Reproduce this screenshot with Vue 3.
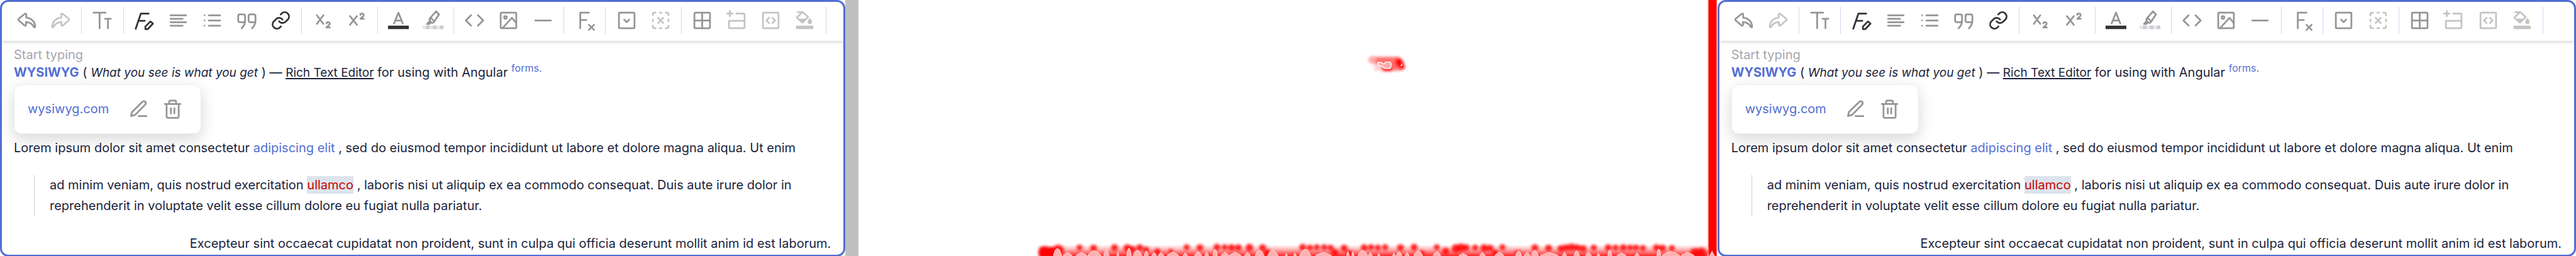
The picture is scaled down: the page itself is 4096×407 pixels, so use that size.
<script setup>
const line = (d) => `<path d="${d}"/>`
const frame = '<rect x="3" y="3" width="18" height="18" rx="1"/>'
const undo = line('M2.6 11.8Q2 11 2.6 10.2L9.5 4.5Q11.5 3.2 11.5 5.6V8.9C17 9.2 21.5 13 21.8 19.3Q21.5 20.8 20.2 19.4C18.3 15.6 15.3 14.2 11.2 13.8V16.8Q11 19 9.3 17.6Z')

const icons = {
  undo,
  redo: `<g transform="translate(24 0) scale(-1 1)">${undo}</g>`,
  size: line('M2 3H16M9 3V21M15.2 10H22M18.6 10V21'),
  font: line('M17 4H8L2 21.6M5 12.4H12.5M19 13.2L22 15.6L16 22H13.2V19Z'),
  align: line('M3 6H21M3 10H17M3 14H21M3 18H17'),
  list: line('M3 6h.01M3 12h.01M3 18h.01M8 6H21M8 12H21M8 18H21'),
  quote: line('M10 12C10 13.5 9.5 14 8 14H4Q2 14 2 12V7Q2 5 4 5H8Q10 5 10 7V12C10 16 8.6 18.6 6 21M22 12C22 13.5 21.5 14 20 14H16Q14 14 14 12V7Q14 5 16 5H20Q22 5 22 7V12C22 16 20.6 18.6 18 21'),
  link: line('M10 13a5 5 0 0 0 7.5.5l3-3a5 5 0 0 0-7-7L11.800 5.200M14 11a5 5 0 0 0-7.500-.5l-3 3a5 5 0 0 0 7 7l1.700-1.700'),
  sub: line('M5 6L12.500 16M12.500 6L5 16M16 15.500Q16 14 18 14T19.800 16Q19.800 17.200 16 20H20'),
  sup: line('M4 7L12 17M12 7L4 17M16 5.500Q16 4 18 4T19.800 6Q19.800 7.200 16 10H20'),
  color: line('M7 15.500L12 3L17 15.500M8.800 12H15.200') + '<rect class="ink" x="0" y="18" width="24" height="4"/>',
  marker:
    line('M15.500 1.500L19 5L13 14Q11.500 15.500 10 14.200L8.500 12.600Q7.500 11.200 8.500 9.500ZM9.200 8.800L13.600 13.200') +
    '<path class="solid" d="M7.500 12L4 16Q4 17 5 17H8L10.500 15Z"/>' +
    '<path class="pale" d="M0 18H24V22H0Z"/><path class="tile" d="M4 18h4v4H4zM12 18h4v4h-4zM20 18h4v4h-4z"/>',
  code: line('M8 6L2 12L8 18M16 6L22 12L16 18'),
  image: frame + '<circle cx="8.500" cy="8.500" r="1.500"/>' + line('M5 21L16 9L21 15'),
  rule: line('M3 12H21'),
  clear: line('M7 21V3H17M7 11.500H14M17 17L23 23M23 17L17 23'),
  details: frame + line('M9 11L12 14L15 11'),
  remove: line('M3 6V5Q3 3 5 3H6M11 3H13M18 3H19Q21 3 21 5V6M21 11V13M21 18V19Q21 21 19 21H18M13 21H11M6 21H5Q3 21 3 19V18M3 13V11M9 9L15 15M15 9L9 15'),
  table: frame + line('M12 3V21M3 12H21'),
  rows: line('M1 4H7M4 1V7M11.600 4H20Q21 4 21 5V20Q21 21 20 21H4Q3 21 3 20V12.500H21'),
  cell: frame + line('M10 9L7 12L10 15M14 9L17 12L14 15'),
  fill:
    line('M4 2.500H10L16 8L9.500 14.500L3.500 9.500Q2.800 8.800 3.500 8L9 2.800') +
    '<path class="solid" d="M3.500 10H15L9 15.500Z"/><path class="solid" d="M18 9Q20.500 11.500 20.500 13.600A2.500 2.500 0 0 1 15.500 13.600Q15.500 11.500 18 9Z"/>' +
    '<rect class="solid" x="2" y="18" width="20" height="4" rx=".7"/>',
  edit: line('M3.200 20L4.200 15.400L16 3.800Q18 2 19.600 3.400Q21 5 19.400 7L8 18.600ZM12 20H21'),
  trash: line('M3 6H21M8 6V3.500Q8 2 9.500 2H14.500Q16 2 16 3.500V6M5 6V20.500Q5 22 6.500 22H17.500Q19 22 19 20.500V6M10 11V17M14 11V17'),
}

const groups = [
  [['undo', 'Undo'], ['redo', 'Redo', 'dim']],
  [['size', 'Font size']],
  [['font', 'Font style', 'dark'], ['align', 'Justify'], ['list', 'List'], ['quote', 'Quote'], ['link', 'Link', 'dark']],
  [['sub', 'Subscript'], ['sup', 'Superscript']],
  [['color', 'Text color'], ['marker', 'Highlight']],
  [['code', 'Code'], ['image', 'Image'], ['rule', 'Horizontal rule']],
  [['clear', 'Clear format']],
  [['details', 'Details'], ['remove', 'Remove details', 'dim']],
  [['table', 'Table'], ['rows', 'Rows and columns', 'dim'], ['cell', 'Merge cells', 'dim'], ['fill', 'Cell color', 'dim']],
]

const editors = ['before', 'after']

// Blobs of the changed strip along the bottom edge: [x, y, radius]
const blobs = [
  [436, 589, 16], [468, 584, 14], [518, 578, 8], [551, 579, 9], [600, 578, 9], [630, 579, 10], [642, 582, 9],
  [659, 578, 9], [674, 583, 8], [700, 587, 8], [732, 586, 6], [769, 577, 8], [800, 578, 9], [840, 577, 9],
  [858, 577, 8], [874, 578, 9], [890, 578, 9], [916, 578, 10], [947, 578, 9], [958, 590, 9], [1041, 577, 9],
  [1058, 578, 8], [1074, 577, 8], [1091, 577, 8], [1106, 578, 8], [1116, 589, 9], [1138, 579, 9], [1150, 591, 8],
  [1185, 578, 9], [1201, 577, 8], [1217, 578, 8], [1234, 577, 8], [1270, 578, 9], [1302, 577, 9], [1320, 591, 7],
  [1355, 577, 8], [1376, 586, 9], [1400, 580, 11], [1412, 578, 11], [1424, 578, 9], [1445, 578, 8], [1466, 579, 10],
  [1480, 579, 9], [1509, 577, 8], [1492, 590, 8], [1545, 591, 8], [1585, 578, 9], [1617, 579, 9], [1646, 580, 9],
  [1658, 578, 9], [1671, 577, 10], [1684, 578, 9], [1698, 580, 9], [1723, 578, 8], [1757, 578, 9], [1774, 578, 8],
  [1792, 578, 9], [1808, 578, 8], [1822, 578, 8], [1838, 579, 8], [1870, 578, 9], [1884, 579, 9], [1906, 579, 8],
  [1960, 590, 12], [1975, 589, 12],
]

// Inner pale patches: [x, width, top]
const patches = [
  [457, 19, 581], [480, 20, 590], [511, 24, 590], [538, 30, 586], [575, 12, 584], [606, 4, 589], [629, 10, 580],
  [644, 20, 585], [670, 9, 586], [688, 10, 590], [703, 12, 590], [724, 26, 589], [761, 10, 591], [788, 16, 588],
  [812, 8, 589], [831, 10, 583], [850, 18, 590], [870, 26, 590], [905, 13, 590], [930, 20, 585], [959, 24, 585],
  [1000, 5, 592], [1020, 6, 592], [1034, 26, 583], [1072, 36, 590], [1144, 6, 588], [1156, 5, 589], [1171, 22, 585],
  [1195, 9, 590], [1217, 5, 592], [1252, 6, 592], [1261, 12, 588], [1281, 9, 590], [1302, 20, 586], [1347, 17, 588],
  [1408, 18, 592], [1456, 12, 590], [1492, 20, 589], [1540, 14, 586], [1560, 14, 590], [1577, 16, 585], [1599, 40, 590],
  [1650, 9, 590], [1677, 12, 586], [1704, 13, 589], [1731, 6, 592], [1756, 9, 584], [1778, 20, 591], [1820, 9, 591],
  [1871, 9, 582], [1884, 40, 588], [1928, 30, 590], [1990, 15, 585],
]

const patchPath = ([x, w, top]) =>
  `M${x} 604V596L${x + w * 0.2} ${top + 4}L${x + w * 0.45} ${top}L${x + w * 0.75} ${top + 3}L${x + w} 597V604`
</script>

<template>
  <main class="board">
    <template v-for="side in editors" :key="side">
      <section class="editor" :class="side">
        <div class="toolbar" role="toolbar" aria-label="Formatting">
          <div class="tools">
            <template v-for="(group, g) in groups" :key="g">
              <button v-for="[name, label, tone] in group" :key="name" type="button" class="tool" :class="tone" :aria-label="label">
                <svg class="icon" viewBox="0 0 24 24" v-html="icons[name]" />
              </button>
              <span class="divider" />
            </template>
          </div>
        </div>

        <div class="content">
          <p class="placeholder">Start typing</p>
          <p class="intro">
            <strong>WYSIWYG</strong> ( <em>What you see is what you get</em> ) — <u>Rich Text Editor</u> for using with Angular <sup>forms.</sup>
          </p>
          <div class="popup">
            <a href="#" class="address">wysiwyg.com</a>
            <button type="button" class="action" aria-label="Edit link">
              <svg class="icon" viewBox="0 0 24 24" v-html="icons.edit" />
            </button>
            <button type="button" class="action" aria-label="Remove link">
              <svg class="icon" viewBox="0 0 24 24" v-html="icons.trash" />
            </button>
          </div>
          <p class="lorem">
            Lorem ipsum dolor sit amet consectetur <a href="#">adipiscing elit</a> , sed do eiusmod tempor incididunt ut labore et dolore magna aliqua. Ut enim
          </p>
          <blockquote>
            ad minim veniam, quis nostrud exercitation <mark>ullamco</mark> , laboris nisi ut aliquip ex ea commodo consequat. Duis aute irure dolor in<br />
            reprehenderit in voluptate velit esse cillum dolore eu fugiat nulla pariatur.
          </blockquote>
          <p class="closing">
            Excepteur sint occaecat cupidatat non proident, sunt in culpa qui officia deserunt mollit anim id est laborum.
          </p>
        </div>
      </section>

      <template v-if="side === 'before'">
        <div class="gutter" />
        <div class="changes">
          <svg class="heat" viewBox="0 0 2012 600" preserveAspectRatio="none" aria-hidden="true">
            <defs>
              <filter id="soft" x="-10%" y="-20%" width="120%" height="140%">
                <feGaussianBlur stdDeviation="3" />
              </filter>
              <linearGradient id="strip" x1="0" y1="0" x2="0" y2="1">
                <stop offset="0" stop-color="#ff0000" stop-opacity="0" />
                <stop offset=".35" stop-color="#ff0000" stop-opacity=".25" />
                <stop offset="1" stop-color="#ff0000" stop-opacity=".9" />
              </linearGradient>
            </defs>
            <g filter="url(#soft)">
              <path d="M1198 140Q1200 130 1212 133H1262Q1276 135 1281 156Q1280 165 1262 165H1230L1212 152Z" fill="#ff6e6e" />
              <path d="M1226 158H1250V166H1226ZM1262 134L1272 138L1281 158L1273 164L1256 148Z" fill="#ff0000" />
              <circle cx="1204" cy="140" r="9" fill="#ffa8a8" />
              <path d="M1208 150H1222L1228 166H1208Z" fill="#ffd4d4" />
            </g>
            <path d="M1217 146H1225L1229 149H1232L1236 145H1246L1248 149V156L1245 160H1233L1228 155H1222L1217 151Z" fill="#ffaaaa" stroke="#ffffff" stroke-width="2" />
            <path d="M1270 153H1273V149" fill="none" stroke="#ffffff" stroke-width="2" />
            <rect x="440" y="572" width="1555" height="28" fill="url(#strip)" />
            <g filter="url(#soft)" fill="#ff0000">
              <circle v-for="([x, y, r], i) in blobs" :key="i" :cx="x" :cy="y + 1" :r="r - 1" fill-opacity=".85" />
              <rect x="424" y="578" width="36" height="32" />
            </g>
            <path v-for="(p, i) in patches" :key="'p' + i" :d="patchPath(p)" fill="#ffb0b0" stroke="#ffffff" stroke-width="1" />
            <rect x="1990" y="0" width="3" height="578" fill="#ff9c9c" />
            <path d="M1992 0H2011V600H2007L2000 586L1992 600Z" fill="#ff0000" />
          </svg>
        </div>
      </template>
    </template>
  </main>
</template>

<style>
body {
  margin: 0;
  background: #ffffff;
}
</style>

<style scoped>
.board {
  display: grid;
  grid-template-columns: 1981fr 31fr 2012fr 2012fr;
  min-height: 100vh;
  overflow: hidden;
  font-family: Inter, "Liberation Sans", sans-serif;
  font-size: 20px;
  line-height: 33px;
  color: #1b1f3b;
}

.editor {
  box-sizing: border-box;
  min-width: 0;
  border: 3px solid #526ed3;
  border-radius: 13px;
  background: #ffffff;
  overflow: hidden;
}

.gutter {
  background: #c0c0c0;
}

.changes {
  position: relative;
  min-width: 0;
}

.heat {
  position: absolute;
  inset: 0;
  width: 100%;
  height: 100%;
}

.toolbar {
  box-sizing: border-box;
  height: 62px;
  padding: 8px 12px 0;
  box-shadow: 0 1px 6px rgba(0, 0, 0, 0.22);
}

.tools {
  display: flex;
  width: 100%;
  max-width: 1304px;
  height: 43px;
}

.tool,
.action {
  display: flex;
  align-items: center;
  justify-content: center;
  min-width: 0;
  padding: 0;
  border: 0;
  background: none;
  color: #959595;
}

.tool {
  flex: 80 1 0;
}

.tool.dim {
  color: #c4c4c4;
}

.tool.dark {
  color: #333333;
}

.divider {
  display: flex;
  flex: 18 1 0;
  justify-content: center;
}

.divider::before {
  content: "";
  width: 1px;
  background: #d0d6f0;
}

.icon {
  flex: none;
  width: 33px;
  height: 33px;
  fill: none;
  stroke: currentColor;
  stroke-width: 2;
  stroke-linecap: round;
  stroke-linejoin: round;
  overflow: visible;
}

.icon :deep(.solid) {
  fill: currentColor;
  stroke: none;
}

.icon :deep(.ink) {
  fill: #333333;
  stroke: none;
}

.icon :deep(.pale) {
  fill: #e6e8ea;
  stroke: none;
}

.icon :deep(.tile) {
  fill: #caccd3;
  stroke: none;
}

.content {
  padding: 8px 20px 1px 19px;
  white-space: nowrap;
}

p {
  margin: 0;
}

a {
  color: #526ed3;
  text-decoration: none;
}

.placeholder {
  line-height: 28px;
  color: #a4a5b1;
}

.intro {
  line-height: 28px;
}

em,
u {
  font-size: 19px;
}

strong {
  font-weight: 700;
  color: #526ed3;
}

u {
  text-decoration-thickness: 2px;
  text-underline-offset: 2px;
}

sup {
  font-size: 16px;
  line-height: 0;
  vertical-align: 8px;
  color: #526ed3;
}

.popup {
  display: flex;
  align-items: center;
  box-sizing: border-box;
  width: 298px;
  height: 79px;
  margin: 4px 0 6px;
  padding: 0 18px 0 21px;
  border: 1px solid #ededed;
  border-radius: 12px;
  background: #ffffff;
  box-shadow: 0 8px 24px rgba(0, 0, 0, 0.16);
}

.address {
  flex: 1;
}

.action {
  width: 54px;
  height: 54px;
}

.lorem {
  position: relative;
}

blockquote {
  margin: 26px 0 27px 32px;
  padding-left: 24px;
  border-left: 1px solid #d5d5d5;
}

mark {
  padding: 2px 0;
  background: #dde4ed;
  color: #cc0000;
}

.closing {
  text-align: right;
}
</style>
